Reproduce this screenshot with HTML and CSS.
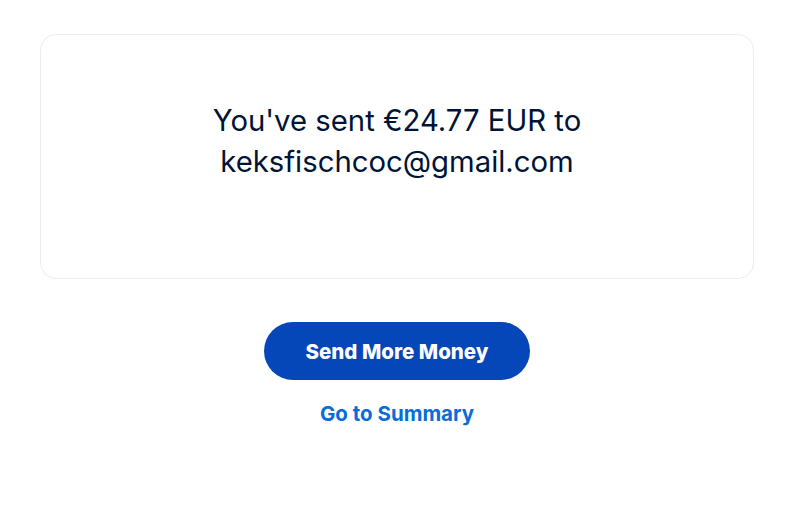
FILE: index.html
```html
<!DOCTYPE html>
<html lang="en">
<head>
<meta charset="utf-8">
<title>Payment sent</title>
<link rel="stylesheet" href="styles.css">
</head>
<body>
<main class="page">
  <section class="card">
    <p class="message">You've sent €24.77 EUR to<br>keksfischcoc@gmail.com</p>
  </section>
  <div class="actions">
    <button class="primary" type="button">Send More Money</button>
    <a class="link" href="#">Go to Summary</a>
  </div>
</main>
</body>
</html>
```

FILE: styles.css
```css
html, body {
  margin: 0;
  padding: 0;
  background: #ffffff;
}
body {
  font-family: Inter, "Liberation Sans", Arial, sans-serif;
  color: #001435;
}
.page {
  width: 714px;
  padding: 34px 0 0 40px;
  display: flex;
  flex-direction: column;
}
.card {
  border: 1px solid #ececec;
  border-radius: 16px;
  padding: 65px 20px 0;
  box-sizing: border-box;
  height: 245px;
}
.message {
  margin: 0;
  text-align: center;
  font-size: 29.3px;
  line-height: 41px;
  font-weight: 400;
}
.actions {
  display: flex;
  flex-direction: column;
  align-items: center;
  margin-top: 43px;
  gap: 20px;
}
.primary {
  width: 266px;
  height: 58px;
  border: none;
  border-radius: 29px;
  background: #0546b8;
  color: #ffffff;
  font-family: Inter, "Liberation Sans", Arial, sans-serif;
  font-size: 20.5px;
  font-weight: 800;
  cursor: pointer;
}
.link {
  color: #0a6cd8;
  font-size: 20.5px;
  font-weight: 700;
  line-height: 28px;
  text-decoration: none;
}
```
